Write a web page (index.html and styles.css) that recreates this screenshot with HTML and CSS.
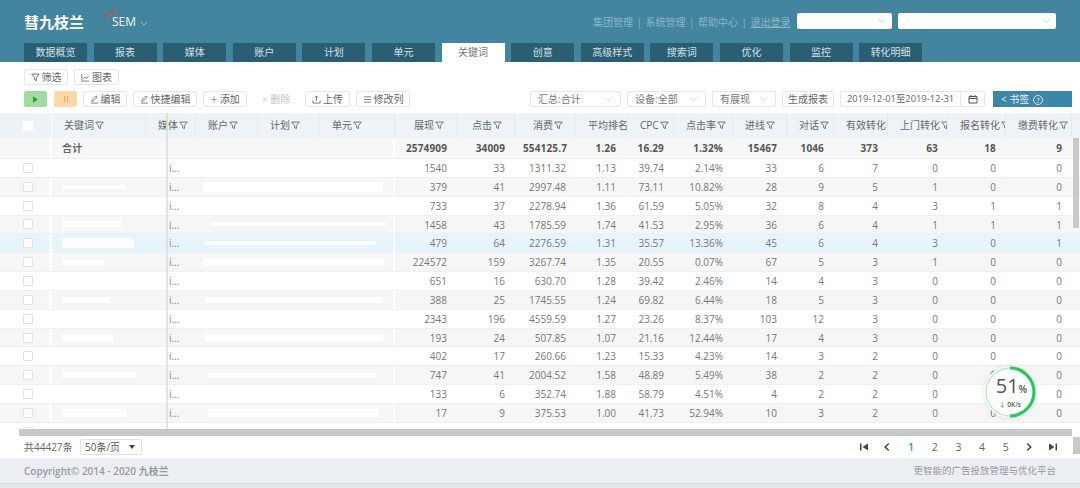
FILE: index.html
```html
<!DOCTYPE html>
<html lang="zh">
<head>
<meta charset="utf-8">
<title>关键词</title>
<link rel="stylesheet" href="styles.css">
</head>
<body>
<svg class="sprite" width="0" height="0">
  <symbol id="funnel" viewBox="0 0 10 10"><path d="M.8 1.2h8.4L6 5.2v3.3L4 7.4V5.2z" fill="none" stroke="currentColor" stroke-width="1"/></symbol>
  <symbol id="pen" viewBox="0 0 10 10"><path d="M1 9h8M2 7l.4-1.8L6.6 1l1.5 1.4L3.8 6.6z" fill="none" stroke="currentColor" stroke-width=".9"/></symbol>
  <symbol id="chev" viewBox="0 0 12 7"><path d="M1 1l5 5 5-5" fill="none" stroke="currentColor" stroke-width="1"/></symbol>
  <symbol id="pg-first" viewBox="0 0 10 10"><path d="M1 1.5h1.5v7H1zM9 1.5v7L3.5 5z" fill="currentColor"/></symbol>
  <symbol id="pg-prev" viewBox="0 0 10 10"><path d="M6.8 1.5L3.2 5l3.6 3.5" fill="none" stroke="currentColor" stroke-width="1.5"/></symbol>
  <symbol id="pg-next" viewBox="0 0 10 10"><path d="M3.2 1.5L6.8 5 3.2 8.5" fill="none" stroke="currentColor" stroke-width="1.5"/></symbol>
  <symbol id="pg-last" viewBox="0 0 10 10"><path d="M9 1.5H7.5v7H9zM1 1.5v7L6.5 5z" fill="currentColor"/></symbol>
</svg>

<header class="top">
  <div class="brand-row">
    <div class="logo">彗九枝兰</div>
    <div class="product"><span class="new-tag">new</span>SEM <svg class="chev-small"><use href="#chev"/></svg></div>
    <nav class="links"><a>集团管理</a><b>|</b><a>系统管理</a><b>|</b><a>帮助中心</a><b>|</b><a class="under">退出登录</a></nav>
    <div class="head-select first"><svg class="chev"><use href="#chev"/></svg></div>
    <div class="head-select second"><svg class="chev"><use href="#chev"/></svg></div>
  </div>
  <div class="tabs">
    <a>数据概览</a><a>报表</a><a>媒体</a><a>账户</a><a>计划</a><a>单元</a><a class="active">关键词</a><a>创意</a><a>高级样式</a><a>搜索词</a><a>优化</a><a>监控</a><a>转化明细</a>
  </div>
</header>

<section class="tools">
  <div class="tool-row">
    <button class="btn w44"><svg class="ic"><use href="#funnel"/></svg>筛选</button>
    <button class="btn w45"><svg class="ic" viewBox="0 0 10 10"><path d="M1 1v8h8M2.5 6.5l2-2 1.5 1.5L8.5 3" fill="none" stroke="currentColor" stroke-width=".9"/></svg>图表</button>
  </div>
  <div class="tool-row second">
    <button class="btn play"><svg class="ic-solid" viewBox="0 0 6 8"><path d="M0 0l6 4-6 4z" fill="#2c9c3c"/></svg></button>
    <button class="btn pause"><span></span><span></span></button>
    <button class="btn w44"><svg class="ic"><use href="#pen"/></svg>编辑</button>
    <button class="btn w64"><svg class="ic"><use href="#pen"/></svg>快捷编辑</button>
    <button class="btn w44"><span class="plus">+</span>添加</button>
    <button class="btn w44 disabled"><span class="plus small">×</span>删除</button>
    <button class="btn w45"><svg class="ic" viewBox="0 0 10 10"><path d="M1 6v3h8V6M5 7V1M3.2 2.8L5 1l1.8 1.8" fill="none" stroke="currentColor" stroke-width=".9"/></svg>上传</button>
    <button class="btn w54"><svg class="ic" viewBox="0 0 10 10"><path d="M1 2h8M1 5h8M1 8h8" fill="none" stroke="currentColor" stroke-width=".9"/></svg>修改列</button>
    <div class="spacer"></div>
    <div class="drop w91">汇总:合计<svg class="chev"><use href="#chev"/></svg></div>
    <div class="drop w79">设备:全部<svg class="chev"><use href="#chev"/></svg></div>
    <div class="drop w64d">有展现<svg class="chev"><use href="#chev"/></svg></div>
    <button class="btn w52">生成报表</button>
    <div class="date"><span class="date-text">2019-12-01至2019-12-31</span><span class="date-ic"><svg viewBox="0 0 10 10"><path d="M1 2.5h8v6.5H1zM1 4.5h8M3 1v2M7 1v2" fill="none" stroke="currentColor" stroke-width="1"/></svg></span></div>
    <div class="bookmark">&lt; 书签 <span class="help">?</span></div>
  </div>
</section>

<main class="table">
  <div class="thead">
    <div class="th cb"><span class="box head"></span></div>
    <div class="th left kw">关键词<svg class="ic-f"><use href="#funnel"/></svg></div>
    <div class="th left media">媒体<svg class="ic-f"><use href="#funnel"/></svg></div>
    <div class="th left">账户<svg class="ic-f"><use href="#funnel"/></svg></div>
    <div class="th left">计划<svg class="ic-f"><use href="#funnel"/></svg></div>
    <div class="th left">单元<svg class="ic-f"><use href="#funnel"/></svg></div>
    <div class="th">展现<svg class="ic-f"><use href="#funnel"/></svg></div>
    <div class="th">点击<svg class="ic-f"><use href="#funnel"/></svg></div>
    <div class="th">消费<svg class="ic-f"><use href="#funnel"/></svg></div>
    <div class="th">平均排名<svg class="ic-f"><use href="#funnel"/></svg></div>
    <div class="th">CPC<svg class="ic-f"><use href="#funnel"/></svg></div>
    <div class="th">点击率<svg class="ic-f"><use href="#funnel"/></svg></div>
    <div class="th">进线<svg class="ic-f"><use href="#funnel"/></svg></div>
    <div class="th">对话<svg class="ic-f"><use href="#funnel"/></svg></div>
    <div class="th">有效转化<svg class="ic-f"><use href="#funnel"/></svg></div>
    <div class="th">上门转化<svg class="ic-f"><use href="#funnel"/></svg></div>
    <div class="th">报名转化<svg class="ic-f"><use href="#funnel"/></svg></div>
    <div class="th">缴费转化<svg class="ic-f"><use href="#funnel"/></svg></div>
  </div>

  <div class="tbody">
    <div class="row total"><div class="cb"></div><div class="kw-cell strong">合计</div><div class="media-cell"></div><div class="span3"></div><div>2574909</div><div>34009</div><div class="clip">554125.7</div><div>1.26</div><div>16.29</div><div>1.32%</div><div>15467</div><div>1046</div><div>373</div><div>63</div><div>18</div><div>9</div></div>

    <div class="row"><div class="cb"><span class="box"></span></div><div class="kw-cell"></div><div class="media-cell">i…</div><div class="span3"></div><div>1540</div><div>33</div><div>1311.32</div><div>1.13</div><div>39.74</div><div>2.14%</div><div>33</div><div>6</div><div>7</div><div>0</div><div>0</div><div>0</div></div>

    <div class="row alt"><div class="cb"><span class="box"></span></div><div class="kw-cell"><i class="bar" style="width:63px;height:4px"></i></div><div class="media-cell">i…</div><div class="span3"><i class="bar" style="margin-left:7px;width:180px;height:10px"></i></div><div>379</div><div>41</div><div>2997.48</div><div>1.11</div><div>73.11</div><div>10.82%</div><div>28</div><div>9</div><div>5</div><div>1</div><div>0</div><div>0</div></div>

    <div class="row"><div class="cb"><span class="box"></span></div><div class="kw-cell"></div><div class="media-cell">i…</div><div class="span3"></div><div>733</div><div>37</div><div>2278.94</div><div>1.36</div><div>61.59</div><div>5.05%</div><div>32</div><div>8</div><div>4</div><div>3</div><div>1</div><div>1</div></div>

    <div class="row alt"><div class="cb"><span class="box"></span></div><div class="kw-cell"><i class="bar" style="width:60px;height:6px"></i></div><div class="media-cell">i…</div><div class="span3"><i class="bar" style="margin-left:14px;width:176px;height:4px"></i></div><div>1458</div><div>43</div><div>1785.59</div><div>1.74</div><div>41.53</div><div>2.95%</div><div>36</div><div>6</div><div>4</div><div>1</div><div>1</div><div>1</div></div>

    <div class="row hl"><div class="cb"><span class="box"></span></div><div class="kw-cell"><i class="bar" style="width:72px;height:10px"></i></div><div class="media-cell">i…</div><div class="span3"><i class="bar" style="margin-left:9px;width:171px;height:4px"></i></div><div>479</div><div>64</div><div>2276.59</div><div>1.31</div><div>35.57</div><div>13.36%</div><div>45</div><div>6</div><div>4</div><div>3</div><div>0</div><div>1</div></div>

    <div class="row alt"><div class="cb"><span class="box"></span></div><div class="kw-cell"><i class="bar" style="width:42px;height:5px"></i></div><div class="media-cell">i…</div><div class="span3"><i class="bar" style="margin-left:7px;width:181px;height:8px"></i></div><div>224572</div><div>159</div><div>3267.74</div><div>1.35</div><div>20.55</div><div>0.07%</div><div>67</div><div>5</div><div>3</div><div>1</div><div>0</div><div>0</div></div>

    <div class="row"><div class="cb"><span class="box"></span></div><div class="kw-cell"></div><div class="media-cell">i…</div><div class="span3"></div><div>651</div><div>16</div><div>630.70</div><div>1.28</div><div>39.42</div><div>2.46%</div><div>14</div><div>4</div><div>3</div><div>0</div><div>0</div><div>0</div></div>

    <div class="row alt"><div class="cb"><span class="box"></span></div><div class="kw-cell"><i class="bar" style="width:48px;height:6px"></i></div><div class="media-cell">i…</div><div class="span3"><i class="bar" style="margin-left:9px;width:178px;height:6px"></i></div><div>388</div><div>25</div><div>1745.55</div><div>1.24</div><div>69.82</div><div>6.44%</div><div>18</div><div>5</div><div>3</div><div>0</div><div>0</div><div>0</div></div>

    <div class="row"><div class="cb"><span class="box"></span></div><div class="kw-cell"></div><div class="media-cell">i…</div><div class="span3"></div><div>2343</div><div>196</div><div>4559.59</div><div>1.27</div><div>23.26</div><div>8.37%</div><div>103</div><div>12</div><div>3</div><div>0</div><div>0</div><div>0</div></div>

    <div class="row alt"><div class="cb"><span class="box"></span></div><div class="kw-cell"><i class="bar" style="width:51px;height:8px"></i></div><div class="media-cell">i…</div><div class="span3"><i class="bar" style="margin-left:9px;width:178px;height:8px"></i></div><div>193</div><div>24</div><div>507.85</div><div>1.07</div><div>21.16</div><div>12.44%</div><div>17</div><div>4</div><div>3</div><div>0</div><div>0</div><div>0</div></div>

    <div class="row"><div class="cb"><span class="box"></span></div><div class="kw-cell"></div><div class="media-cell">i…</div><div class="span3"></div><div>402</div><div>17</div><div>260.66</div><div>1.23</div><div>15.33</div><div>4.23%</div><div>14</div><div>3</div><div>2</div><div>0</div><div>0</div><div>0</div></div>

    <div class="row alt"><div class="cb"><span class="box"></span></div><div class="kw-cell"><i class="bar" style="width:74px;height:6px"></i></div><div class="media-cell">i…</div><div class="span3"><i class="bar" style="margin-left:12px;width:169px;height:5px"></i></div><div>747</div><div>41</div><div>2004.52</div><div>1.58</div><div>48.89</div><div>5.49%</div><div>38</div><div>2</div><div>2</div><div>0</div><div>0</div><div>0</div></div>

    <div class="row"><div class="cb"><span class="box"></span></div><div class="kw-cell"></div><div class="media-cell">i…</div><div class="span3"></div><div>133</div><div>6</div><div>352.74</div><div>1.88</div><div>58.79</div><div>4.51%</div><div>4</div><div>2</div><div>2</div><div>0</div><div>0</div><div>0</div></div>

    <div class="row alt"><div class="cb"><span class="box"></span></div><div class="kw-cell"><i class="bar" style="width:65px;height:8px"></i></div><div class="media-cell">i…</div><div class="span3"><i class="bar" style="margin-left:12px;width:171px;height:8px"></i></div><div>17</div><div>9</div><div>375.53</div><div>1.00</div><div>41.73</div><div>52.94%</div><div>10</div><div>3</div><div>2</div><div>0</div><div>0</div><div>0</div></div>

    <div class="row"><div class="cb"><span class="box"></span></div></div>
  </div>
  <div class="frozen-line"></div>
  <div class="hscroll"></div>
  <div class="vscroll"></div>
  <div class="vscroll lower"></div>
</main>

<div class="pager">
  <span class="count">共44427条</span>
  <div class="page-size">50条/页<span class="caret"></span></div>
  <div class="spacer"></div>
  <a class="pg sym"><svg><use href="#pg-first"/></svg></a><a class="pg sym"><svg><use href="#pg-prev"/></svg></a><a class="pg on">1</a><a class="pg">2</a><a class="pg">3</a><a class="pg">4</a><a class="pg">5</a><a class="pg sym"><svg><use href="#pg-next"/></svg></a><a class="pg sym"><svg><use href="#pg-last"/></svg></a>
</div>

<footer class="foot">
  <span class="copy">Copyright© 2014 - 2020 九枝兰</span>
  <span class="slogan">更智能的广告投放管理与优化平台</span>
</footer>
<div class="page-end"></div>

<aside class="speed">
  <svg viewBox="0 0 52 52" class="ring">
    <circle cx="26" cy="26" r="24" fill="none" stroke="#b4ecc3" stroke-width="1.4"/>
    <path d="M26 2A24 24 0 0 1 26 50" fill="none" stroke="#2dc463" stroke-width="3.2"/>
  </svg>
  <div class="speed-num">51<small>%</small></div>
  <div class="speed-rate"><em>↓</em> 0K/s</div>
</aside>
</body>
</html>
```

FILE: styles.css
```css
* { box-sizing: border-box; }
html, body { margin: 0; padding: 0; }
body {
  width: 1080px;
  height: 488px;
  overflow: hidden;
  position: relative;
  background: #fff;
  color: #666;
  font: 10px/1.2 "Open Sans", "Noto Sans CJK SC", sans-serif;
}
.sprite { position: absolute; }
button { font: inherit; color: inherit; padding: 0; margin: 0; background: #fff; }
.spacer { flex: 1; }

/* header */
.top { height: 62px; background: #43859f; display: flex; flex-direction: column; }
.brand-row { height: 43px; display: flex; align-items: flex-start; padding-left: 24px; }
.logo { color: #fff; font-size: 15px; font-weight: 700; line-height: 17px; margin-top: 14px; width: 60px; white-space: nowrap; }
.product { position: relative; color: #f2f7fa; font-size: 12px; line-height: 16px; margin: 14px 0 0 28px; width: 60px; white-space: nowrap; }
.new-tag { position: absolute; left: -9px; top: -9px; color: #d8444c; font-size: 8px; font-style: italic; transform: rotate(-32deg); }
.chev-small { width: 8px; height: 5px; color: #cfe2ea; margin-left: 1px; }
.links { margin: 14px 0 0 421px; width: 204px; color: #8ab6c9; font-size: 10px; line-height: 16px; white-space: nowrap; display: flex; }
.links b { font-weight: 400; margin: 0 3.5px; }
.links .under { text-decoration: underline; }
.head-select { height: 16px; margin-top: 13px; background: #fff; border-radius: 2px; position: relative; }
.head-select.first { width: 95px; }
.head-select.second { width: 158px; margin-left: 6px; }
.head-select .chev { position: absolute; right: 5px; top: 5px; }
.chev { width: 9px; height: 6px; color: #c3c8cc; display: block; }
.tabs { height: 19px; display: flex; padding-left: 24px; gap: 6.6px; }
.tabs a { width: 63px; background: #2b5d73; color: #d3e1e7; text-align: center; font-size: 10px; line-height: 19px; }
.tabs a.active { background: #fff; color: #777; }

/* toolbar */
.tools { height: 51px; padding: 7px 8px 0 24px; }
.tool-row { display: flex; gap: 6px; height: 16px; align-items: stretch; }
.tool-row.second { margin-top: 6px; }
.btn { border: 1px solid #e6e6e6; border-radius: 2px; display: flex; align-items: center; justify-content: center; white-space: nowrap; color: #666; font-size: 10px; }
.w44 { width: 44px; }
.w45 { width: 45px; }
.w52 { width: 52px; }
.w54 { width: 54px; }
.w64 { width: 64px; }
.ic { width: 9px; height: 9px; margin-right: 2px; flex: none; color: #666; }
.play { width: 23px; background: #a0dca2; border-color: #a0dca2; }
.ic-solid { width: 5px; height: 7px; }
.pause { width: 23px; margin-left: 1px; background: #fcd9a6; border-color: #fcd9a6; gap: 2px; }
.pause span { width: 1px; height: 6px; background: #e9ad5a; }
.plus { font-size: 13px; line-height: 10px; margin-right: 2px; font-weight: 300; }
.plus.small { font-size: 11px; color: #bbb; }
.disabled { border-color: transparent; color: #c4c4c4; margin: 0 1px; }
.drop { border: 1px solid #e6e6e6; border-radius: 2px; display: flex; align-items: center; justify-content: space-between; padding: 0 7px; color: #777; white-space: nowrap; }
.w91 { width: 91px; }
.w79 { width: 79px; }
.w64d { width: 64px; }
.date { width: 145px; border: 1px solid #e6e6e6; border-radius: 2px; display: flex; align-items: center; }
.date-text { width: 119px; padding-left: 6px; white-space: nowrap; color: #666; font-size: 9.4px; }
.date-ic { flex: 1; height: 100%; border-left: 1px solid #e6e6e6; display: flex; align-items: center; justify-content: center; }
.date-ic svg { width: 10px; height: 10px; color: #555; }
.bookmark { width: 79px; margin-left: 2px; background: #3c86a8; color: #e3eff5; padding-left: 8px; line-height: 16px; white-space: nowrap; }
.help { display: inline-block; width: 10px; height: 10px; line-height: 9px; margin-left: 1px; border: 1px solid #d5e6ee; border-radius: 50%; text-align: center; font-size: 7px; vertical-align: 0; }

/* table */
.table { position: relative; height: 323px; }
.thead, .row { display: grid; }
.thead {
  height: 25px;
  background: #eef3f8;
  grid-template-columns: 52px 94px 50px 62px 62px 75px 62px 58px 61px 52px 46px 59px 54px 47px 54px 60px 58px 66px;
}
.th {
  height: 25px;
  line-height: 25px;
  padding: 0 12px;
  text-align: right;
  white-space: nowrap;
  overflow: hidden;
  color: #666;
  font-size: 10px;
  border-right: 1px solid #e3e9ef;
}
.th.cb { text-align: left; padding: 0 0 0 23px; background: #edf2f7; border-right-color: #fff; display: flex; align-items: center; }
.th.left { text-align: left; padding-left: 12px; }
.ic-f { width: 9px; height: 9px; margin-left: 1px; vertical-align: -1px; color: #666; }
.tbody { position: relative; height: 291px; overflow: hidden; }
.row {
  height: 18.85px;
  line-height: 18.85px;
  grid-template-columns: 52px 117px 27px 199px 62px 58px 61px 50px 48px 59px 54px 47px 54px 60px 58px 66px;
  border-bottom: 1px solid #f0f0f0;
  color: #777;
  white-space: nowrap;
}
.row > div { text-align: right; padding-right: 10px; overflow: hidden; }
.row > .cb { padding: 0 0 0 23px; border-right: 3px solid #fff; display: flex; align-items: center; }
.row > .kw-cell { text-align: left; padding: 0 0 0 10px; display: flex; align-items: center; }
.row > .media-cell { text-align: left; padding: 0; color: #888; }
.row > .span3 { padding: 0; text-align: left; border-right: 2px solid #fff; display: flex; align-items: center; }
.box { width: 10px; height: 10px; background: #fff; border: 1px solid #e2e2e2; border-radius: 1px; display: block; }
.box.head { border-color: #fff; }
.bar { display: block; background: #fff; flex: none; }
.alt { background: #f6f6f6; }
.hl { background: #e8f4fb; }
.total { height: 21px; line-height: 21px; background: #f7f7f7; font-weight: 700; color: #555; letter-spacing: .15px; }
.total .strong { color: #666; }
.total .cb { border-right-color: #fff; }
.total .clip { padding: 0 0 0 8px; text-align: left; }
.frozen-line { position: absolute; left: 166px; top: 0; height: 316px; width: 2px; background: #dcdcdc; opacity: .8; }
.hscroll { height: 7px; margin: 0 8px 0 19px; background: #c8c8c8; }
.vscroll { position: absolute; right: 1px; top: 25px; width: 6px; height: 90px; background: #c9c9c9; }
.vscroll.lower { top: 324px; height: 17px; width: 7px; right: 0; }

/* pager */
.pager { height: 22px; display: flex; align-items: center; padding: 0 15px 0 24px; }
.count { width: 56px; color: #666; }
.page-size { width: 62px; height: 16px; border: 1px solid #e2e2e2; border-radius: 2px; line-height: 14px; padding-left: 4px; position: relative; color: #555; }
.caret { position: absolute; right: 6px; top: 5px; border: 3.5px solid transparent; border-top: 4px solid #444; border-bottom: 0; }
.pg { width: 23.7px; text-align: center; color: #666; font-size: 10.5px; }
.pg.sym { color: #444; display: flex; justify-content: center; }
.pg.sym svg { width: 10px; height: 10px; }
.pg.on { color: #2a9ad0; font-weight: 600; }

/* footer */
.foot { height: 25px; background: #ebeff4; display: flex; justify-content: space-between; align-items: center; padding: 0 24px; color: #999; }
.copy { font-weight: 600; }
.slogan { font-size: 9.5px; }
.page-end { height: 5px; background: #e4e8ed; border-top: 1px solid #d8dce1; }

/* floating speed widget */
.speed {
  position: absolute;
  left: 984px;
  top: 366px;
  width: 52px;
  height: 52px;
  border-radius: 50%;
  background: #fff;
  box-shadow: 0 0 4px rgba(0, 0, 0, .12);
  text-align: center;
  color: #555;
}
.ring { position: absolute; inset: 0; }
.speed-num { position: relative; font-size: 20px; line-height: 22px; margin-top: 9px; padding-left: 3px; }
.speed-num small { font-size: 10px; font-weight: 600; }
.speed-rate { position: relative; font-size: 6.5px; line-height: 8px; margin-top: 1px; font-weight: 600; }
.speed-rate em { color: #2dc463; font-style: normal; font-weight: 700; }
```
